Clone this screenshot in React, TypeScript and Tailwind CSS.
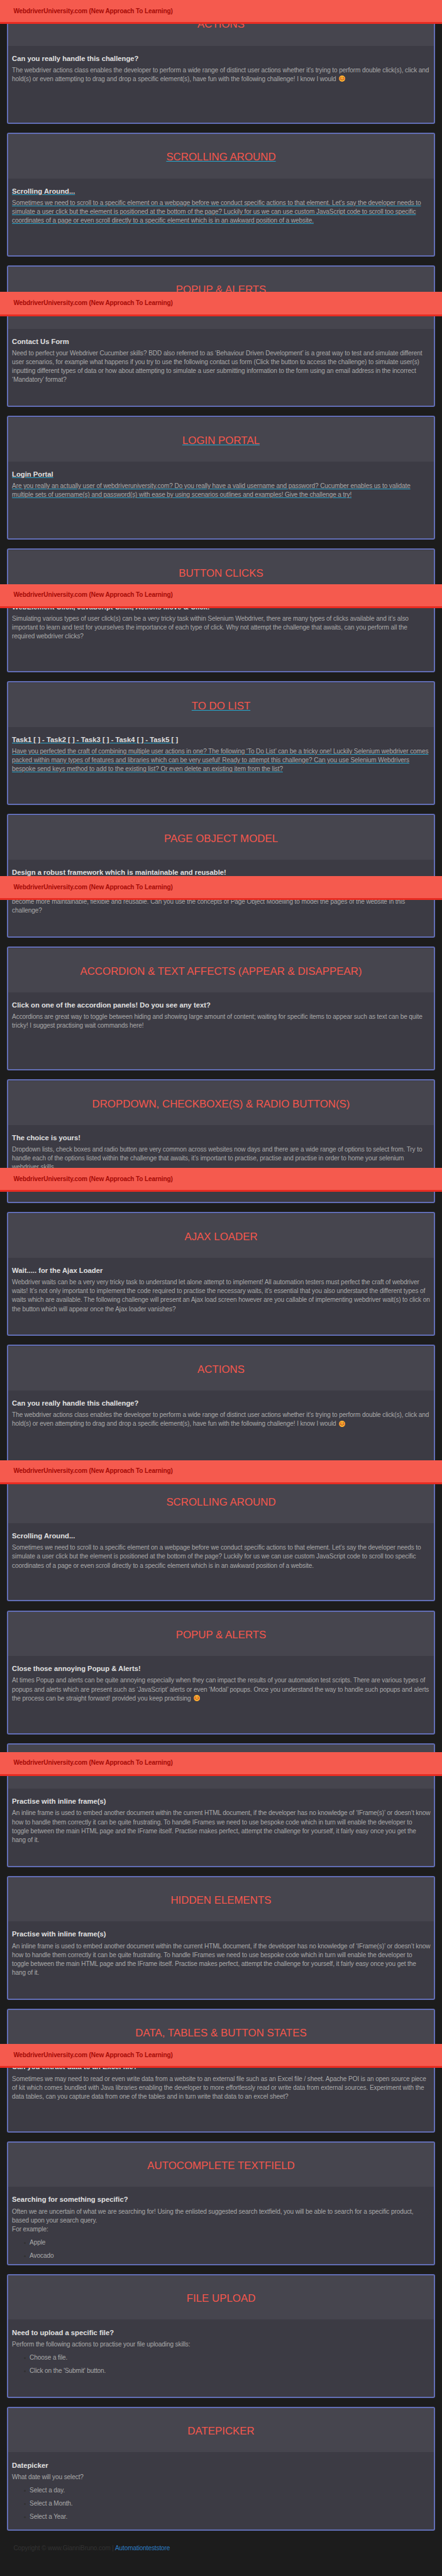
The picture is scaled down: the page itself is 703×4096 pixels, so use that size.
import type { ReactNode } from "react";

type Item = {
  title: string;
  heading: string;
  lines: ReactNode[];
  bullets?: string[];
  linked?: boolean;
};

function Smile() {
  return (
    <svg viewBox="0 0 36 36" className="ml-[2px] inline-block size-[10.2px] align-[-1.6px]">
      <circle cx="18" cy="18" r="17.6" fill="#ffac33" />
      <circle cx="7.5" cy="19" r="4" fill="#ff5a3c" />
      <circle cx="28.5" cy="19" r="4" fill="#ff5a3c" />
      <path d="M8 13q3.500-6 7 0M21 13q3.500-6 7 0" fill="none" stroke="#664500" strokeWidth="2.4" strokeLinecap="round" />
      <path d="M10 22q8 8.500 16 0" fill="none" stroke="#664500" strokeWidth="2.6" strokeLinecap="round" />
    </svg>
  );
}

const actions: Item = {
  title: "ACTIONS",
  heading: "Can you really handle this challenge?",
  lines: [
    "The webdriver actions class enables the developer to perform a wide range of distinct user actions whether it’s trying to perform double click(s), click and",
    <>hold(s) or even attempting to drag and drop a specific element(s), have fun with the following challenge! I know I would <Smile /></>,
  ],
};

const scrolling: Item = {
  title: "SCROLLING AROUND",
  heading: "Scrolling Around...",
  lines: [
    "Sometimes we need to scroll to a specific element on a webpage before we conduct specific actions to that element. Let’s say the developer needs to",
    "simulate a user click but the element is positioned at the bottom of the page? Luckily for us we can use custom JavaScript code to scroll too specific",
    "coordinates of a page or even scroll directly to a specific element which is in an awkward position of a website.",
  ],
};

const popups: Item = {
  title: "POPUP & ALERTS",
  heading: "Close those annoying Popup & Alerts!",
  lines: [
    "At times Popup and alerts can be quite annoying especially when they can impact the results of your automation test scripts. There are various types of",
    "popups and alerts which are present such as ‘JavaScript’ alerts or even ‘Modal’ popups. Once you understand the way to handle such popups and alerts",
    <>the process can be straight forward! provided you keep practising <Smile /></>,
  ],
};

const frameLines = [
  "An inline frame is used to embed another document within the current HTML document, if the developer has no knowledge of ‘IFrame(s)’ or doesn’t know",
  "how to handle them correctly it can be quite frustrating. To handle IFrames we need to use bespoke code which in turn will enable the developer to",
  "toggle between the main HTML page and the IFrame itself. Practise makes perfect, attempt the challenge for yourself, it fairly easy once you get the",
  "hang of it.",
];

const firstItems: Item[] = [actions, { ...scrolling, linked: true }, popups];

const restItems: Item[] = [
  {
    title: "",
    heading: "Contact Us Form",
    lines: [
      "Need to perfect your Webdriver Cucumber skills? BDD also referred to as ‘Behaviour Driven Development’ is a great way to test and simulate different",
      "user scenarios, for example what happens if you try to use the following contact us form (Click the button to access the challenge) to simulate user(s)",
      "inputting different types of data or how about attempting to simulate a user submitting information to the form using an email address in the incorrect",
      "‘Mandatory’ format?",
    ],
  },
  {
    title: "LOGIN PORTAL",
    heading: "Login Portal",
    linked: true,
    lines: [
      "Are you really an actually user of webdriveruniversity.com? Do you really have a valid username and password? Cucumber enables us to validate",
      "multiple sets of username(s) and password(s) with ease by using scenarios outlines and examples! Give the challenge a try!",
    ],
  },
  {
    title: "BUTTON CLICKS",
    heading: "WebElement Click, JavaScript Click, Actions Move & Click!",
    lines: [
      "Simulating various types of user click(s) can be a very tricky task within Selenium Webdriver, there are many types of clicks available and it’s also",
      "important to learn and test for yourselves the importance of each type of click. Why not attempt the challenge that awaits, can you perform all the",
      "required webdriver clicks?",
    ],
  },
  {
    title: "TO DO LIST",
    heading: "Task1 [ ] - Task2 [ ] - Task3 [ ] - Task4 [ ] - Task5 [ ]",
    linked: true,
    lines: [
      "Have you perfected the craft of combining multiple user actions in one? The following ‘To Do List’ can be a tricky one! Luckily Selenium webdriver comes",
      "packed within many types of features and libraries which can be very useful! Ready to attempt this challenge? Can you use Selenium Webdrivers",
      "bespoke send keys method to add to the existing list? Or even delete an existing item from the list?",
    ],
  },
  {
    title: "PAGE OBJECT MODEL",
    heading: "Design a robust framework which is maintainable and reusable!",
    lines: [
      "",
      "",
      "become more maintainable, flexible and reusable. Can you use the concepts of Page Object Modelling to model the pages of the website in this",
      "challenge?",
    ],
  },
  {
    title: "ACCORDION & TEXT AFFECTS (APPEAR & DISAPPEAR)",
    heading: "Click on one of the accordion panels! Do you see any text?",
    lines: [
      "Accordions are great way to toggle between hiding and showing large amount of content; waiting for specific items to appear such as text can be quite",
      "tricky! I suggest practising wait commands here!",
    ],
  },
  {
    title: "DROPDOWN, CHECKBOXE(S) & RADIO BUTTON(S)",
    heading: "The choice is yours!",
    lines: [
      "Dropdown lists, check boxes and radio button are very common across websites now days and there are a wide range of options to select from. Try to",
      "handle each of the options listed within the challenge that awaits, it’s important to practise, practise and practise in order to home your selenium",
      "webdriver skills.",
    ],
  },
  {
    title: "AJAX LOADER",
    heading: "Wait..... for the Ajax Loader",
    lines: [
      "Webdriver waits can be a very very tricky task to understand let alone attempt to implement! All automation testers must perfect the craft of webdriver",
      "waits! It’s not only important to implement the code required to practise the necessary waits, it’s essential that you also understand the different types of",
      "waits which are available. The following challenge will present an Ajax load screen however are you callable of implementing webdriver wait(s) to click on",
      "the button which will appear once the Ajax loader vanishes?",
    ],
  },
  actions,
  scrolling,
  popups,
  { title: "", heading: "Practise with inline frame(s)", lines: frameLines },
  { title: "HIDDEN ELEMENTS", heading: "Practise with inline frame(s)", lines: frameLines },
  {
    title: "DATA, TABLES & BUTTON STATES",
    heading: "Can you extract data to an Excel file?",
    lines: [
      "Sometimes we may need to read or even write data from a website to an external file such as an Excel file / sheet. Apache POI is an open source piece",
      "of kit which comes bundled with Java libraries enabling the developer to more effortlessly read or write data from external sources. Experiment with the",
      "data tables, can you capture data from one of the tables and in turn write that data to an excel sheet?",
    ],
  },
  {
    title: "AUTOCOMPLETE TEXTFIELD",
    heading: "Searching for something specific?",
    lines: [
      "Often we are uncertain of what we are searching for! Using the enlisted suggested search textfield, you will be able to search for a specific product,",
      "based upon your search query.",
      "For example:",
    ],
    bullets: ["Apple", "Avocado"],
  },
  {
    title: "FILE UPLOAD",
    heading: "Need to upload a specific file?",
    lines: ["Perform the following actions to practise your file uploading skills:"],
    bullets: ["Choose a file.", "Click on the 'Submit' button."],
  },
  {
    title: "DATEPICKER",
    heading: "Datepicker",
    lines: ["What date will you select?"],
    bullets: ["Select a day.", "Select a Month.", "Select a Year."],
  },
];

function Card({ item }: { item: Item }) {
  const link = item.linked ? "underline decoration-[#2ba6cb]" : "";
  return (
    <article className="mb-[14.07px] h-[196.98px] overflow-hidden rounded-[3px] border-2 border-[#626eb5] bg-[#3c3b44]">
      <div className="mx-[0.3px] mt-[0.25px] flex h-[70.3px] items-center justify-center bg-[#46454e] pt-[4px]">
        <h2 className={`text-[16.87px] leading-[20px] whitespace-nowrap text-[#f5574d] ${link}`}>{item.title}</h2>
      </div>
      <div className="pt-[12.25px] pl-[6.43px] whitespace-nowrap">
        <h4 className={`text-[11.25px] leading-[16px] font-bold text-[#e0e0e0] ${link}`}>{item.heading}</h4>
        <div className={`mt-[4.1px] text-[10.12px] leading-[14.07px] tracking-[-0.12px] text-[#aaaaaa] ${link}`}>
          {item.lines.map((line, i) => (
            <p key={i} className="h-[14.07px]">
              {line}
            </p>
          ))}
        </div>
        {item.bullets && (
          <ul className="mt-[7.2px] flex flex-col gap-[7.03px] pl-[19px] text-[10.12px] leading-[14.07px] tracking-[-0.12px] text-[#aaaaaa]">
            {item.bullets.map((b) => (
              <li key={b} className="flex h-[14.07px] items-center gap-[6.2px]">
                <span className="mt-[1.5px] size-[2.8px] rounded-full bg-[#333333]" />
                {b}
              </li>
            ))}
          </ul>
        )}
      </div>
    </article>
  );
}

const BANNER_STEP = 464.3;

function Banner({ index }: { index: number }) {
  return (
    <header
      className="absolute inset-x-0 flex h-[38.27px] items-center border-b-[3px] border-[#e82c22] bg-[#f55a4e] pl-[21.4px] text-[10.12px] leading-[14px] font-bold tracking-[-0.15px] text-[#a60b07]"
      style={{ top: index * BANNER_STEP }}
    >
      WebdriverUniversity.com (New Approach To Learning)
    </header>
  );
}

export default function App() {
  return (
    <div className="relative h-[4096px] w-[703px] overflow-hidden bg-[#1c1c1c] font-['Liberation_Sans',Arial,sans-serif]">
      <section className="h-[464.3px] overflow-hidden px-[10.69px]">
        {firstItems.map((item, i) => (
          <Card key={i} item={item} />
        ))}
      </section>
      <section className="overflow-hidden px-[10.69px]">
        <div className="-mt-[14.07px]">
          {restItems.map((item, i) => (
            <Card key={i} item={item} />
          ))}
        </div>
      </section>
      <footer className="pt-[7.7px] pl-[21.4px] text-[10.12px] leading-[14px] tracking-[-0.138px] text-[#333333]">
        Copyright © www.GianniBruno.com | <a className="text-[#2c7cc4]">Automationteststore</a>
      </footer>
      {[0, 1, 2, 3, 4, 5, 6, 7].map((i) => (
        <Banner key={i} index={i} />
      ))}
    </div>
  );
}
